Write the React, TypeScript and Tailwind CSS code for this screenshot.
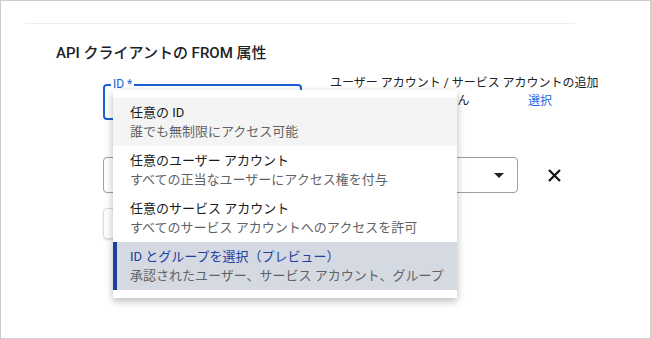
import React from "react";

const items = [
  { t: "任意の ID", s: "誰でも無制限にアクセス可能", hover: true },
  { t: "任意のユーザー アカウント", s: "すべての正当なユーザーにアクセス権を付与" },
  { t: "任意のサービス アカウント", s: "すべてのサービス アカウントへのアクセスを許可" },
  { t: "ID とグループを選択（プレビュー）", s: "承認されたユーザー、サービス アカウント、グループ", selected: true },
];

export default function App() {
  return (
    <div
      className="relative w-[651px] h-[339px] overflow-hidden border border-[#cdcdcd] bg-white text-[#202124]"
      style={{ fontFamily: 'Roboto, "Noto Sans CJK JP", sans-serif' }}
    >
      <div className="ml-[24px] mt-[22px] h-px w-[550px] bg-[#eceef2]" />
      <div className="ml-[55px] mt-[19px] text-[15px] leading-[20px] font-medium">
        API クライアントの FROM 属性
      </div>

      <div className="ml-[102px] mt-[21px] flex items-start">
        <div className="relative h-[36px] w-[199px] rounded-[4px] border-2 border-[#1a5fd6]">
          <span className="absolute -top-[10px] left-[6px] bg-white px-[2px] text-[12px] leading-[16px] text-[#1a5fd6]">
            ID *
          </span>
        </div>
        <div className="ml-[28px] -mt-[10px] text-[12px] leading-[18px] text-[#202124]">
          <div>ユーザー アカウント / サービス アカウントの追加</div>
          <div className="flex">
            <span className="w-[198px] tracking-[0.5px]">ID が選択されていません</span>
            <span className="text-[#1a6ae8]">選択</span>
          </div>
        </div>
      </div>

      <div className="ml-[102px] mt-[37px] flex items-center">
        <div className="flex h-[36px] w-[415px] items-center justify-end rounded-[4px] border border-[#9aa0a6] pr-[13px]">
          <svg width="10" height="5" viewBox="0 0 10 5">
            <path d="M0 0 L10 0 L5 5 Z" fill="#202124" />
          </svg>
        </div>
        <svg className="ml-[30px]" width="13" height="13" viewBox="0 0 13 13">
          <path d="M1 1 L12 12 M12 1 L1 12" stroke="#111" strokeWidth="2.2" />
        </svg>
      </div>

      <div className="ml-[102px] mt-[15px] h-[31px] w-[120px] rounded-[4px] border border-[#dadce0] shadow-[0_1px_2px_rgba(0,0,0,0.15)]" />

      <div className="absolute left-[112px] top-[89px] w-[344px] bg-white py-[8px] shadow-[0_3px_8px_rgba(0,0,0,0.28)]">
        {items.map((it) => (
          <div
            key={it.t}
            className={
              it.selected
                ? "h-[48px] border-l-[4px] border-[#1f3ea5] bg-[#d5d9e2] py-[5px] pl-[13px]"
                : it.hover
                ? "h-[48px] bg-[#f4f4f4] py-[5px] pl-[17px]"
                : "h-[48px] py-[5px] pl-[17px]"
            }
          >
            <div
              className={
                it.selected
                  ? "text-[13px] leading-[19px] text-[#2140a0]"
                  : "text-[13px] leading-[19px] text-[#1a1a1a]"
              }
            >
              {it.t}
            </div>
            <div className="text-[13px] leading-[19px] text-[#5f6368]">{it.s}</div>
          </div>
        ))}
      </div>
    </div>
  );
}
